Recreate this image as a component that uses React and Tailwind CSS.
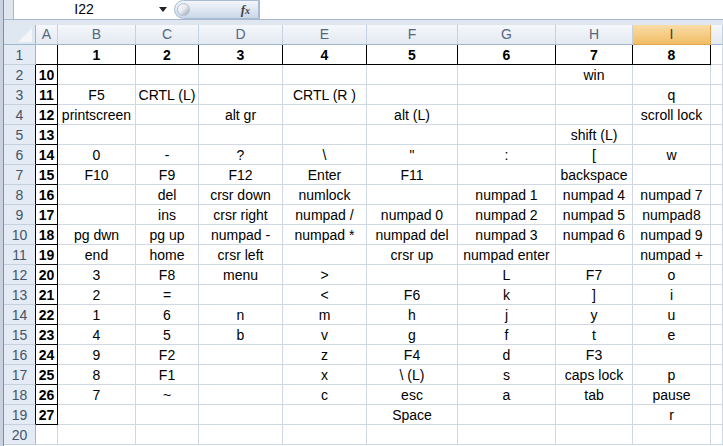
import React from 'react';

const COLS = ['A', 'B', 'C', 'D', 'E', 'F', 'G', 'H', 'I', 'J'];

// values keyed by sheet row, then column letter
const DATA = {
  1: { B: '1', C: '2', D: '3', E: '4', F: '5', G: '6', H: '7', I: '8' },
  2: { A: '10', H: 'win' },
  3: { A: '11', B: 'F5', C: 'CRTL (L)', E: 'CRTL (R )', I: 'q' },
  4: { A: '12', B: 'printscreen', D: 'alt gr', F: 'alt (L)', I: 'scroll lock' },
  5: { A: '13', H: 'shift (L)' },
  6: { A: '14', B: '0', C: '-', D: '?', E: '\\', F: '"', G: ':', H: '[', I: 'w' },
  7: { A: '15', B: 'F10', C: 'F9', D: 'F12', E: 'Enter', F: 'F11', H: 'backspace' },
  8: { A: '16', C: 'del', D: 'crsr down', E: 'numlock', G: 'numpad 1', H: 'numpad 4', I: 'numpad 7' },
  9: { A: '17', C: 'ins', D: 'crsr right', E: 'numpad /', F: 'numpad 0', G: 'numpad 2', H: 'numpad 5', I: 'numpad8' },
  10: { A: '18', B: 'pg dwn', C: 'pg up', D: 'numpad -', E: 'numpad *', F: 'numpad del', G: 'numpad 3', H: 'numpad 6', I: 'numpad 9' },
  11: { A: '19', B: 'end', C: 'home', D: 'crsr left', F: 'crsr up', G: 'numpad enter', I: 'numpad +' },
  12: { A: '20', B: '3', C: 'F8', D: 'menu', E: '>', G: 'L', H: 'F7', I: 'o' },
  13: { A: '21', B: '2', C: '=', E: '<', F: 'F6', G: 'k', H: ']', I: 'i' },
  14: { A: '22', B: '1', C: '6', D: 'n', E: 'm', F: 'h', G: 'j', H: 'y', I: 'u' },
  15: { A: '23', B: '4', C: '5', D: 'b', E: 'v', F: 'g', G: 'f', H: 't', I: 'e' },
  16: { A: '24', B: '9', C: 'F2', E: 'z', F: 'F4', G: 'd', H: 'F3' },
  17: { A: '25', B: '8', C: 'F1', E: 'x', F: '\\ (L)', G: 's', H: 'caps lock', I: 'p' },
  18: { A: '26', B: '7', C: '~', E: 'c', F: 'esc', G: 'a', H: 'tab', I: 'pause' },
  19: { A: '27', F: 'Space', I: 'r' },
  20: {},
};

const ROWS = Array.from({ length: 20 }, (_, i) => i + 1);

const boxed = (r, c) =>
  (r === 1 && c !== 'A' && c !== 'J' && c) || (c === 'A' && r >= 2 && r <= 19);

function Cell({ r, c }) {
  const i = COLS.indexOf(c);
  const right = boxed(r, c) || boxed(r, COLS[i + 1]);
  const bottom = boxed(r, c) || boxed(r + 1, c);
  const bold = r === 1 || c === 'A';
  return (
    <div
      className={`h-[20px] flex items-end justify-center border-r border-b text-[14px] leading-[17px] text-black whitespace-nowrap overflow-visible ${
        right ? 'border-r-black' : 'border-r-[#d0d7e5]'
      } ${bottom ? 'border-b-black' : 'border-b-[#d0d7e5]'} ${bold ? 'font-bold' : ''}`}
    >
      {DATA[r][c]}
    </div>
  );
}

function FormulaBar() {
  return (
    <div className="h-[25px] flex flex-col bg-[#dfe6ef]">
      <div className="h-[20px] flex border-b border-[#a7b8cd]">
        <div className="w-[10px] bg-[#dfe6ef] border-r border-[#a7b8cd]" />
        <div className="w-[160px] bg-white flex items-center relative">
          <span className="w-[140px] text-center text-[14px] text-black">I22</span>
          <svg width="8" height="5" viewBox="0 0 8 5" className="ml-[5px]">
            <path d="M0 0 L8 0 L4 5 Z" fill="#222" />
          </svg>
        </div>
        <div className="w-[85px] bg-white flex items-center">
          <div className="h-[19px] w-full rounded-l-full bg-gradient-to-b from-[#f3f6fb] via-[#dfe7f2] to-[#cad7e8] border border-[#a9bbd2] flex items-center justify-between pl-[2px] pr-[8px]">
            <div className="w-[13px] h-[13px] rounded-full bg-gradient-to-br from-white via-[#e4e8ee] to-[#9aa4b2] border border-[#b4bfcc]" />
            <span className="text-[13px] italic font-bold text-[#444] leading-none" style={{ fontFamily: '"Liberation Serif", serif' }}>
              f<span className="text-[10px]">x</span>
            </span>
          </div>
        </div>
        <div className="flex-1 bg-white border-l border-[#a7b8cd]" />
      </div>
    </div>
  );
}

export default function App() {
  return (
    <div
      className="w-[723px] h-[446px] overflow-hidden bg-white flex"
      style={{ fontFamily: '"Liberation Sans", Arial, sans-serif' }}
    >
      <div className="w-[4px] bg-[#c9d2de] border-r border-[#7f8da0]" />
      <div className="flex-1 flex flex-col">
        <FormulaBar />
        <div className="grid grid-cols-[32px_22px_78px_63px_84px_84px_91px_98px_77px_78px_12px] grid-rows-[20px]">
          {/* corner */}
          <div className="h-[20px] bg-[#dfe7f1] border-r border-b border-[#9eb6ce] relative overflow-hidden">
            <svg width="32" height="20" className="absolute inset-0">
              <path d="M28 3 L28 17 L14 17 Z" fill="#f4f6f9" />
            </svg>
          </div>
          {COLS.map((c) => (
            <div
              key={c}
              className={`h-[20px] flex items-center justify-center border-r border-b text-[14px] ${
                c === 'I'
                  ? 'bg-gradient-to-b from-[#f9dca6] to-[#f1bd63] border-r-[#e2a550] border-b-[#e2a550] text-[#3c3c3c]'
                  : 'bg-gradient-to-b from-[#f5f8fb] to-[#e3e9f1] border-r-[#c5d1de] border-b-[#9eb6ce] text-[#55677f]'
              }`}
            >
              {c === 'J' ? '' : c}
            </div>
          ))}
          {ROWS.map((r) => (
            <React.Fragment key={r}>
              <div
                className={`h-[20px] flex items-end justify-center bg-[#e4ebf5] border-r border-b border-b-[#c5d1de] text-[14px] leading-[17px] text-[#44546a] ${
                  r >= 2 && r <= 19 ? 'border-r-black' : 'border-r-[#9eb6ce]'
                }`}
              >
                {r}
              </div>
              {COLS.map((c) => (
                <Cell key={c} r={r} c={c} />
              ))}
            </React.Fragment>
          ))}
        </div>
      </div>
    </div>
  );
}
